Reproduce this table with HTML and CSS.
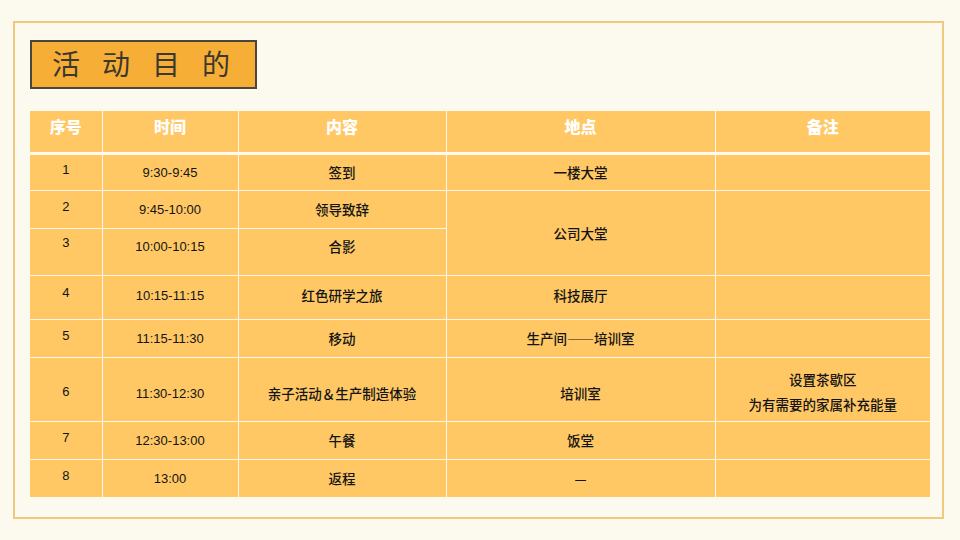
FILE: index.html
```html
<!DOCTYPE html>
<html lang="zh">
<head>
<meta charset="utf-8">
<title>活动目的</title>
<link rel="stylesheet" href="styles.css">
</head>
<body>
<div class="frame">
  <div class="title">活动目的</div>
  <table class="sched">
    <colgroup>
      <col class="c1"><col class="c2"><col class="c3"><col class="c4"><col class="c5">
    </colgroup>
    <thead>
      <tr><th>序号</th><th>时间</th><th>内容</th><th>地点</th><th>备注</th></tr>
    </thead>
    <tbody>
      <tr class="r1"><td class="no">1</td><td class="t">9:30-9:45</td><td>签到</td><td>一楼大堂</td><td></td></tr>
      <tr class="r2"><td class="no">2</td><td class="t">9:45-10:00</td><td>领导致辞</td><td class="merged" rowspan="2">公司大堂</td><td class="merged" rowspan="2"></td></tr>
      <tr class="r3"><td class="no">3</td><td class="t">10:00-10:15</td><td>合影</td></tr>
      <tr class="r4"><td class="no">4</td><td class="t">10:15-11:15</td><td>红色研学之旅</td><td>科技展厅</td><td></td></tr>
      <tr class="r5"><td class="no">5</td><td class="t">11:15-11:30</td><td>移动</td><td>生产间——培训室</td><td></td></tr>
      <tr class="r6"><td class="no">6</td><td class="t">11:30-12:30</td><td>亲子活动＆生产制造体验</td><td>培训室</td><td class="note">设置茶歇区<br>为有需要的家属补充能量</td></tr>
      <tr class="r7"><td class="no">7</td><td class="t">12:30-13:00</td><td>午餐</td><td>饭堂</td><td></td></tr>
      <tr class="r8"><td class="no">8</td><td class="t">13:00</td><td>返程</td><td>—</td><td></td></tr>
    </tbody>
  </table>
</div>
</body>
</html>
```

FILE: styles.css
```css
html, body {
  margin: 0;
  padding: 0;
  background: #fcf9ee;
}
body {
  width: 960px;
  height: 540px;
  padding-top: 21px;
  box-sizing: border-box;
  font-family: "Liberation Sans", "Noto Sans CJK SC", sans-serif;
  color: #141414;
}
.frame {
  margin-left: 13px;
  width: 931px;
  height: 498px;
  box-sizing: border-box;
  border: 2px solid #f0c97f;
  padding: 17px 0 0 15px;
}
.title {
  width: 227px;
  height: 49px;
  box-sizing: border-box;
  border: 2.5px solid #48463f;
  background: #f6ae37;
  font-family: "Noto Sans CJK SC", sans-serif;
  font-size: 28px;
  line-height: 42px;
  letter-spacing: 22px;
  color: #3b3830;
  padding-left: 20px;
  white-space: nowrap;
}
.sched {
  margin-top: 22px;
  width: 900px;
  border-collapse: collapse;
  table-layout: fixed;
  font-size: 13.5px;
}
.c1 { width: 72px; }
.c2 { width: 136px; }
.c3 { width: 208px; }
.c4 { width: 269px; }
.c5 { width: 215px; }
.sched th, .sched td {
  background: #ffc865;
  border: 1px solid #fff8ea;
  text-align: center;
  vertical-align: middle;
  padding: 0;
  box-sizing: border-box;
}
.sched tr > :first-child { border-left: none; }
.sched tr > :last-child { border-right: none; }
.sched thead th {
  border-top: none;
  border-bottom: 3px solid #fffaf0;
  height: 42px;
  padding-bottom: 10px;
  color: #ffffff;
  font-family: "Noto Sans CJK SC", sans-serif;
  font-weight: 900;
  font-size: 16px;
}
.sched tbody tr:last-child td { border-bottom: none; }
.sched td {
  font-family: "Noto Sans CJK SC", sans-serif;
  font-weight: 500;
}
.sched td.t, .sched td.no {
  font-family: "Liberation Sans", sans-serif;
  font-weight: normal;
  font-size: 13px;
}
.sched td.no { padding-bottom: 5px; }
.r1 td { height: 37px; }
.r2 td { height: 38px; }
.r3 td { height: 47px; padding-bottom: 11px; }
.r3 td.no { padding-bottom: 19px; }
.r4 td { height: 44px; padding-bottom: 4px; }
.r4 td.no { padding-bottom: 10px; }
.r5 td { height: 38px; }
.r6 td { height: 64px; padding-top: 8px; }
.r6 td.no { padding-top: 4px; padding-bottom: 0; }
.r7 td { height: 38px; }
.r8 td { height: 38px; }
.sched td.merged { padding: 0; }
.sched td.note { line-height: 25px; padding-top: 5px; }
```
